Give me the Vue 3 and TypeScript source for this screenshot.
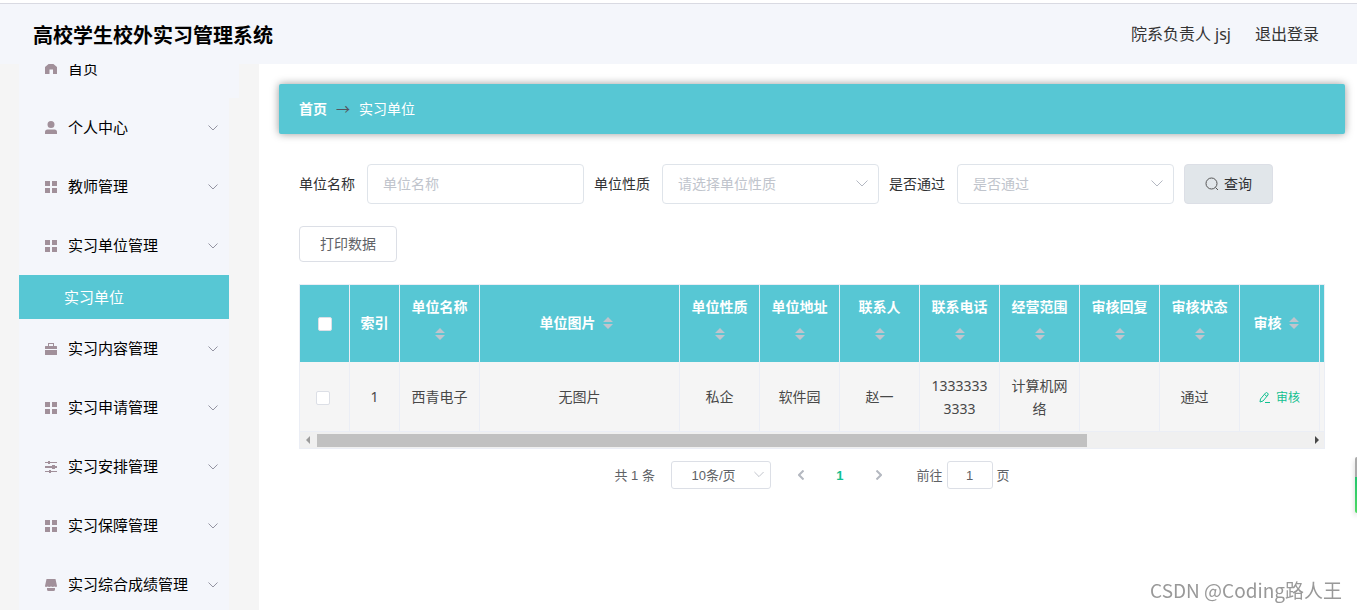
<script setup lang="ts">
import { ref } from 'vue'

type IconName = 'home' | 'user' | 'grid' | 'case' | 'sliders' | 'shop'

interface MenuItem {
  label: string
  icon: IconName
  children?: string[]
}

interface Column {
  key: string
  label: string
  width: number
  sortable: boolean
}

const menu: MenuItem[] = [
  { label: '个人中心', icon: 'user' },
  { label: '教师管理', icon: 'grid' },
  { label: '实习单位管理', icon: 'grid', children: ['实习单位'] },
  { label: '实习内容管理', icon: 'case' },
  { label: '实习申请管理', icon: 'grid' },
  { label: '实习安排管理', icon: 'sliders' },
  { label: '实习保障管理', icon: 'grid' },
  { label: '实习综合成绩管理', icon: 'shop' },
]

const iconPaths: Record<IconName, string> = {
  home: 'M6 0 12 5V12H8V7.500H4.500V12H0V5z',
  user: 'M6 0a3.500 3.500 0 1 1 0 7a3.500 3.500 0 1 1 0-7zM0 13V11q0-2.500 2.500-2.500h7q2.500 0 2.500 2.500v2z',
  grid: 'M0 1h5v5h-5zM7 1h5v5h-5zM0 8h5v5h-5zM7 8h5v5h-5z',
  case: 'M3 4V1h6v3h2.500q.500 0 .500.500V7H0V4.500Q0 4 .500 4zM4 2v2h4V2zM0 8h12v4.500q0 .500-.500.500H.500q-.500 0-.500-.500z',
  sliders: 'M0 2h3V1h2v1h7v1H5v1H3V3H0zM0 6h7V5h3v1h2v2h-2v1H7V8H0zM0 11h4v-1h2v1h6v1H6v1H4v-1H0z',
  shop: 'M1.500 1h9l1.500 7q0 1-1 1l-1.500-.500-1.700.500-1.800-.500-1.800.500-1.700-.500-1.500.500q-1 0-1-1zM2 10h8v1.500q0 1.500-1.500 1.500h-5Q2 13 2 11.500z',
}

const columns: Column[] = [
  { key: 'name', label: '单位名称', width: 80, sortable: true },
  { key: 'image', label: '单位图片', width: 200, sortable: true },
  { key: 'kind', label: '单位性质', width: 80, sortable: true },
  { key: 'address', label: '单位地址', width: 80, sortable: true },
  { key: 'contact', label: '联系人', width: 80, sortable: true },
  { key: 'phone', label: '联系电话', width: 80, sortable: true },
  { key: 'scope', label: '经营范围', width: 80, sortable: true },
  { key: 'reply', label: '审核回复', width: 80, sortable: true },
  { key: 'status', label: '审核状态', width: 80, sortable: true },
  { key: 'audit', label: '审核', width: 80, sortable: true },
  { key: 'actions', label: '', width: 300, sortable: false },
]

const rows: Record<string, string>[] = [
  {
    name: '西青电子',
    image: '无图片',
    kind: '私企',
    address: '软件园',
    contact: '赵一',
    phone: '13333333333',
    scope: '计算机网络',
    reply: '',
    status: '通过',
  },
]

const unitName = ref('')
const unitKind = ref('')
const passed = ref('')
const pageSize = ref('10')
const page = ref('1')
</script>

<template>
  <div class="app">
    <header class="topbar">
      <h1 class="brand">高校学生校外实习管理系统</h1>
      <div class="account">
        <span>院系负责人 jsj</span>
        <a href="#">退出登录</a>
      </div>
    </header>

    <div class="body">
      <aside class="sidebar">
        <nav class="menu">
          <a href="#" class="item item-home">
            <svg class="icon" viewBox="0 0 13 13"><path :d="iconPaths.home" /></svg>
            <span class="item-label">首页</span>
          </a>
          <template v-for="m in menu" :key="m.label">
            <a href="#" class="item">
              <svg class="icon" viewBox="0 0 13 13"><path fill-rule="evenodd" :d="iconPaths[m.icon]" /></svg>
              <span class="item-label">{{ m.label }}</span>
              <svg class="chevron" viewBox="0 0 10 6"><path d="M.5.5 5 5 9.500.5" /></svg>
            </a>
            <a v-for="c in m.children" :key="c" href="#" class="subitem">{{ c }}</a>
          </template>
        </nav>
      </aside>

      <main class="main">
        <nav class="crumbs">
          <a href="#" class="crumb-home">首页</a>
          <span class="crumb-arrow">→</span>
          <span>实习单位</span>
        </nav>

        <section class="content">
          <form class="filters" @submit.prevent>
            <div class="field">
              <label for="unit-name">单位名称</label>
              <input id="unit-name" v-model="unitName" class="control" type="text" placeholder="单位名称" />
            </div>
            <div class="field">
              <label for="unit-kind">单位性质</label>
              <div class="select-wrap">
                <select id="unit-kind" v-model="unitKind" class="control">
                  <option value="">请选择单位性质</option>
                  <option value="私企">私企</option>
                </select>
                <svg class="select-arrow" viewBox="0 0 12 7"><path d="M.5.5 6 6 11.500.5" /></svg>
              </div>
            </div>
            <div class="field">
              <label for="passed">是否通过</label>
              <div class="select-wrap">
                <select id="passed" v-model="passed" class="control">
                  <option value="">是否通过</option>
                  <option value="通过">通过</option>
                </select>
                <svg class="select-arrow" viewBox="0 0 12 7"><path d="M.5.5 6 6 11.500.5" /></svg>
              </div>
            </div>
            <button class="search" type="submit">
              <svg viewBox="0 0 14 14"><circle cx="6.500" cy="6.500" r="5.500" /><path d="M10.500 10.500 13 13" /></svg>
              <span>查询</span>
            </button>
          </form>

          <button class="print" type="button">打印数据</button>

          <div class="grid">
            <div class="grid-view">
              <table>
                <colgroup>
                  <col class="col-narrow" />
                  <col class="col-narrow" />
                  <col v-for="c in columns" :key="c.key" :style="{ width: c.width + 'px' }" />
                </colgroup>
                <thead>
                  <tr>
                    <th><input type="checkbox" class="tick" aria-label="全选" /></th>
                    <th>索引</th>
                    <th v-for="c in columns" :key="c.key">
                      <div class="head">
                        <span>{{ c.label }}</span>
                        <span v-if="c.sortable" class="sorter">
                          <svg viewBox="0 0 10 12"><path d="M0 5 5 0 10 5zM0 7h10L5 12z" /></svg>
                        </span>
                      </div>
                    </th>
                  </tr>
                </thead>
                <tbody>
                  <tr v-for="(r, i) in rows" :key="i">
                    <td class="cell-tick"><input type="checkbox" class="tick" aria-label="选择" /></td>
                    <td>{{ i + 1 }}</td>
                    <td v-for="c in columns" :key="c.key" :class="'cell-' + c.key">
                      <button v-if="c.key === 'audit'" class="audit" type="button">
                        <svg viewBox="0 0 11 11">
                          <path d="M1.500 7 6.500 1Q7.500 0 8.500 1T9 3L4 9 1 10zM5.500 2.500 8 4.500M6 10.500h5" />
                        </svg>
                        <span>审核</span>
                      </button>
                      <template v-else>{{ r[c.key] }}</template>
                    </td>
                  </tr>
                </tbody>
              </table>
            </div>
            <div class="scrollbar">
              <svg class="scroll-left" viewBox="0 0 4 8"><path d="M4 0v8L0 4z" /></svg>
              <div class="track"><div class="thumb"></div></div>
              <svg class="scroll-right" viewBox="0 0 4 8"><path d="M0 0v8l4-4z" /></svg>
            </div>
          </div>

          <div class="pager">
            <span class="total">共 1 条</span>
            <div class="select-wrap size-wrap">
              <select v-model="pageSize" class="size" aria-label="每页条数">
                <option value="10">10条/页</option>
                <option value="20">20条/页</option>
              </select>
              <svg class="select-arrow" viewBox="0 0 12 7"><path d="M.5.5 6 6 11.500.5" /></svg>
            </div>
            <button class="step" type="button" aria-label="上一页">
              <svg viewBox="0 0 6 10"><path d="M5.500.5 1 5l4.500 4.500" /></svg>
            </button>
            <button class="step current" type="button">1</button>
            <button class="step" type="button" aria-label="下一页">
              <svg viewBox="0 0 6 10"><path d="M.5.5 5 5 .5 9.500" /></svg>
            </button>
            <label class="jump-label" for="jump">前往</label>
            <input id="jump" v-model="page" class="jump" type="text" />
            <span class="unit">页</span>
          </div>
        </section>
      </main>
    </div>

    <div class="side-widget"></div>
    <div class="watermark">CSDN @Coding路人王</div>
  </div>
</template>

<style>
body {
  margin: 0;
  background: #fff;
}
</style>

<style scoped>
.app {
  --teal: #57c7d4;
  --line: #ebeef5;
  display: flex;
  flex-direction: column;
  height: 100vh;
  overflow: hidden;
  font-family: 'Noto Sans', 'Noto Sans CJK SC', sans-serif;
  font-size: 14px;
  color: #303133;
}
.app * {
  box-sizing: border-box;
}
a {
  color: inherit;
  text-decoration: none;
}
button,
input,
select {
  font: inherit;
  color: inherit;
  margin: 0;
}
svg {
  display: block;
  flex: none;
}
.topbar {
  flex: none;
  display: flex;
  align-items: center;
  justify-content: space-between;
  height: 61px;
  margin-top: 3px;
  padding: 0 38px 0 33px;
  border-top: 1px solid #d9dae2;
  background: #f4f6fb;
}
.brand {
  margin: 0;
  font-size: 20px;
  font-weight: 700;
  color: #000;
}
.account {
  display: flex;
  gap: 24px;
  padding-bottom: 2px;
  font-size: 16px;
  color: #333;
}
.body {
  flex: 1;
  display: flex;
  min-height: 0;
}
.sidebar {
  flex: none;
  width: 259px;
  overflow: hidden;
  background: #f5f5f5;
}
.menu {
  width: 210px;
  margin: -25px 0 0 19px;
  background: #f4f6fb;
}
.item {
  display: flex;
  align-items: center;
  height: 59px;
  padding: 0 11px 0 26px;
  font-size: 15px;
  color: #000;
}
.item-home {
  width: 220px;
  background: #f4f6fb;
}
.icon {
  width: 13px;
  height: 13px;
  fill: #a1909a;
}
.item-label {
  flex: 1;
  margin-left: 10px;
  padding-bottom: 2px;
}
.chevron {
  width: 10px;
  height: 6px;
  fill: none;
  stroke: #9494a2;
}
.subitem {
  display: flex;
  align-items: center;
  height: 44px;
  padding: 0 0 2px 45px;
  background: var(--teal);
  font-size: 15px;
  color: #fff;
}
.main {
  flex: 1;
  min-width: 0;
  padding: 20px 12px 0 20px;
}
.crumbs {
  display: flex;
  align-items: center;
  gap: 9px;
  height: 50px;
  padding: 0 20px 2px;
  border-radius: 2px;
  background: var(--teal);
  box-shadow: 0 0 8px rgba(0, 0, 0, 0.4);
  color: #fff;
}
.crumb-home {
  font-weight: 700;
}
.crumb-arrow {
  font-family: 'Noto Sans CJK SC', sans-serif;
  color: #555560;
}
.content {
  padding: 30px 20px 0;
}
.filters {
  display: flex;
  flex-wrap: wrap;
  gap: 10px;
}
.field {
  display: flex;
  align-items: center;
  gap: 12px;
}
.field label {
  padding-bottom: 2px;
}
.control {
  display: block;
  width: 217px;
  height: 40px;
  padding: 0 15px 2px;
  border: 1px solid #dfe4ea;
  border-radius: 4px;
  background: #fff;
  color: #c0c4cc;
  appearance: none;
}
.control::placeholder {
  color: #c0c4cc;
  opacity: 1;
}
.select-wrap {
  position: relative;
}
.select-arrow {
  position: absolute;
  top: 50%;
  right: 11px;
  width: 12px;
  height: 7px;
  margin-top: -4px;
  fill: none;
  stroke: #b4b8c2;
  pointer-events: none;
}
.search {
  display: flex;
  align-items: center;
  justify-content: center;
  gap: 5px;
  width: 89px;
  height: 40px;
  padding: 0;
  border: 1px solid #dcdfe6;
  border-radius: 4px;
  background: #e1e6ea;
}
.search span {
  padding-bottom: 2px;
}
.search svg {
  width: 14px;
  height: 14px;
  fill: none;
  stroke: #555;
}
.print {
  display: block;
  width: 98px;
  height: 36px;
  margin: 22px 0;
  padding: 0 0 2px;
  border: 1px solid #dcdfe6;
  border-radius: 4px;
  background: #fff;
  color: #606266;
}
.grid {
  border: 1px solid var(--line);
}
.grid-view {
  overflow: hidden;
}
table {
  width: 1320px;
  table-layout: fixed;
  border-collapse: separate;
  border-spacing: 0;
}
.col-narrow {
  width: 50px;
}
th,
td {
  padding: 0 10px;
  border-right: 1px solid var(--line);
  line-height: 23px;
  text-align: center;
  word-break: break-all;
}
th {
  height: 77px;
  padding-bottom: 2px;
  background: var(--teal);
  color: #fff;
  font-weight: 700;
}
td {
  height: 70px;
  border-bottom: 1px solid var(--line);
  background: #f5f5f5;
  color: #484848;
}
.head {
  display: flex;
  flex-wrap: wrap;
  align-items: center;
  justify-content: center;
}
.sorter {
  display: flex;
  align-items: center;
  justify-content: center;
  width: 24px;
  height: 32px;
}
.sorter svg {
  width: 10px;
  height: 12px;
  fill: #c0c4cc;
}
.tick {
  display: inline-block;
  width: 14px;
  height: 14px;
  border: 1px solid #dcdfe6;
  border-radius: 2px;
  background: #fff;
  appearance: none;
  vertical-align: middle;
}
.cell-tick {
  padding: 0 14px 0 10px;
}
.cell-status {
  padding: 0 20px 0 10px;
}
.audit {
  display: inline-flex;
  align-items: center;
  gap: 6px;
  padding: 0;
  border: 0;
  background: none;
  font-size: 12px;
  color: #11c090;
  vertical-align: middle;
}
.audit svg {
  width: 11px;
  height: 11px;
  fill: none;
  stroke: #11c090;
}
.cell-audit {
  padding: 0 8px;
}
.scrollbar {
  display: flex;
  align-items: center;
  height: 16px;
  padding: 0 5px 0 6px;
  background: #f0f0f0;
}
.scrollbar svg {
  width: 4px;
  height: 8px;
  fill: #9c9c9c;
}
.scrollbar .scroll-right {
  fill: #484848;
}
.track {
  flex: 1;
  margin: 0 5px 0 7px;
}
.thumb {
  width: calc(100% * 1024 / 1320);
  height: 13px;
  background: #c1c1c1;
}
.pager {
  display: flex;
  align-items: center;
  justify-content: center;
  margin-top: 12px;
  font-family: 'Liberation Sans', 'Noto Sans CJK SC', sans-serif;
  font-size: 13px;
  color: #606266;
}
.total {
  min-width: 43px;
  margin-right: 14px;
}
.total,
.jump-label,
.unit {
  padding-bottom: 2px;
}
.size-wrap {
  margin-right: 10px;
}
.size {
  display: block;
  width: 100px;
  height: 28px;
  padding: 0 34px 0 18px;
  border: 1px solid #dcdfe6;
  border-radius: 3px;
  background: #fff;
  text-align: center;
  appearance: none;
}
.size-wrap .select-arrow {
  right: 7px;
  width: 10px;
}
.step {
  display: flex;
  align-items: center;
  justify-content: center;
  width: 39px;
  height: 28px;
  padding: 0;
  border: 0;
  background: none;
}
.step svg {
  width: 6px;
  height: 10px;
  fill: none;
  stroke: #b4b8c0;
  stroke-width: 2;
}
.current {
  font-weight: 700;
  color: #11c090;
}
.jump-label {
  margin-left: 18px;
}
.jump {
  width: 46px;
  height: 28px;
  margin: 0 4px;
  padding: 0 3px;
  border: 1px solid #dcdfe6;
  border-radius: 3px;
  background: #fff;
  text-align: center;
}
.side-widget {
  position: fixed;
  top: 457px;
  right: 0;
  width: 2px;
  height: 56px;
  border-radius: 2px 0 0 2px;
  background: linear-gradient(#aaa 0 20px, #22c46c 20px, #4fd964 56px);
  box-shadow: 0 3px 5px rgba(0, 0, 0, 0.25);
}
.watermark {
  position: fixed;
  right: 15px;
  bottom: 6px;
  font-family: 'Noto Sans CJK SC', sans-serif;
  font-size: 19px;
  line-height: 28px;
  color: #999;
}
</style>
